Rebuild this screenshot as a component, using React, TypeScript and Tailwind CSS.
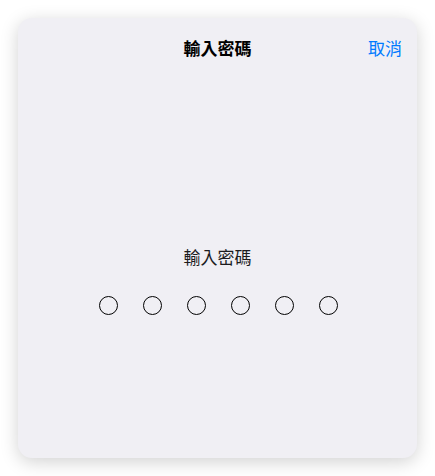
import React from 'react';

const App: React.FC = () => {
  const dots = [0, 1, 2, 3, 4, 5];

  return (
    <div
      className="w-[435px] h-[476px] bg-white pt-[18px] pl-[18px]"
      style={{ fontFamily: '"Noto Sans CJK TC", "Noto Sans", sans-serif' }}
    >
      <div className="w-[399px] h-[440px] rounded-[14px] bg-[#f0eff4] shadow-[0_4px_18px_rgba(0,0,0,0.18)] flex flex-col">
        {/* header */}
        <div className="grid grid-cols-[1fr_auto_1fr] items-center h-[60px]">
          <div />
          <h1 className="text-[17px] font-semibold text-black leading-6">輸入密碼</h1>
          <button className="justify-self-end pr-[15px] text-[17px] text-[#007aff] leading-6">取消</button>
        </div>

        <div className="flex flex-col items-center pt-[167px]">
          <p className="text-[17px] text-[#1c1c1e] leading-6">輸入密碼</p>
          <div className="flex gap-[25px] mt-[27px] ml-[2px]">
            {dots.map((d) => (
              <span key={d} className="w-[19px] h-[19px] rounded-full border-[1.5px] border-black" />
            ))}
          </div>
        </div>
      </div>
    </div>
  );
};

export default App;
